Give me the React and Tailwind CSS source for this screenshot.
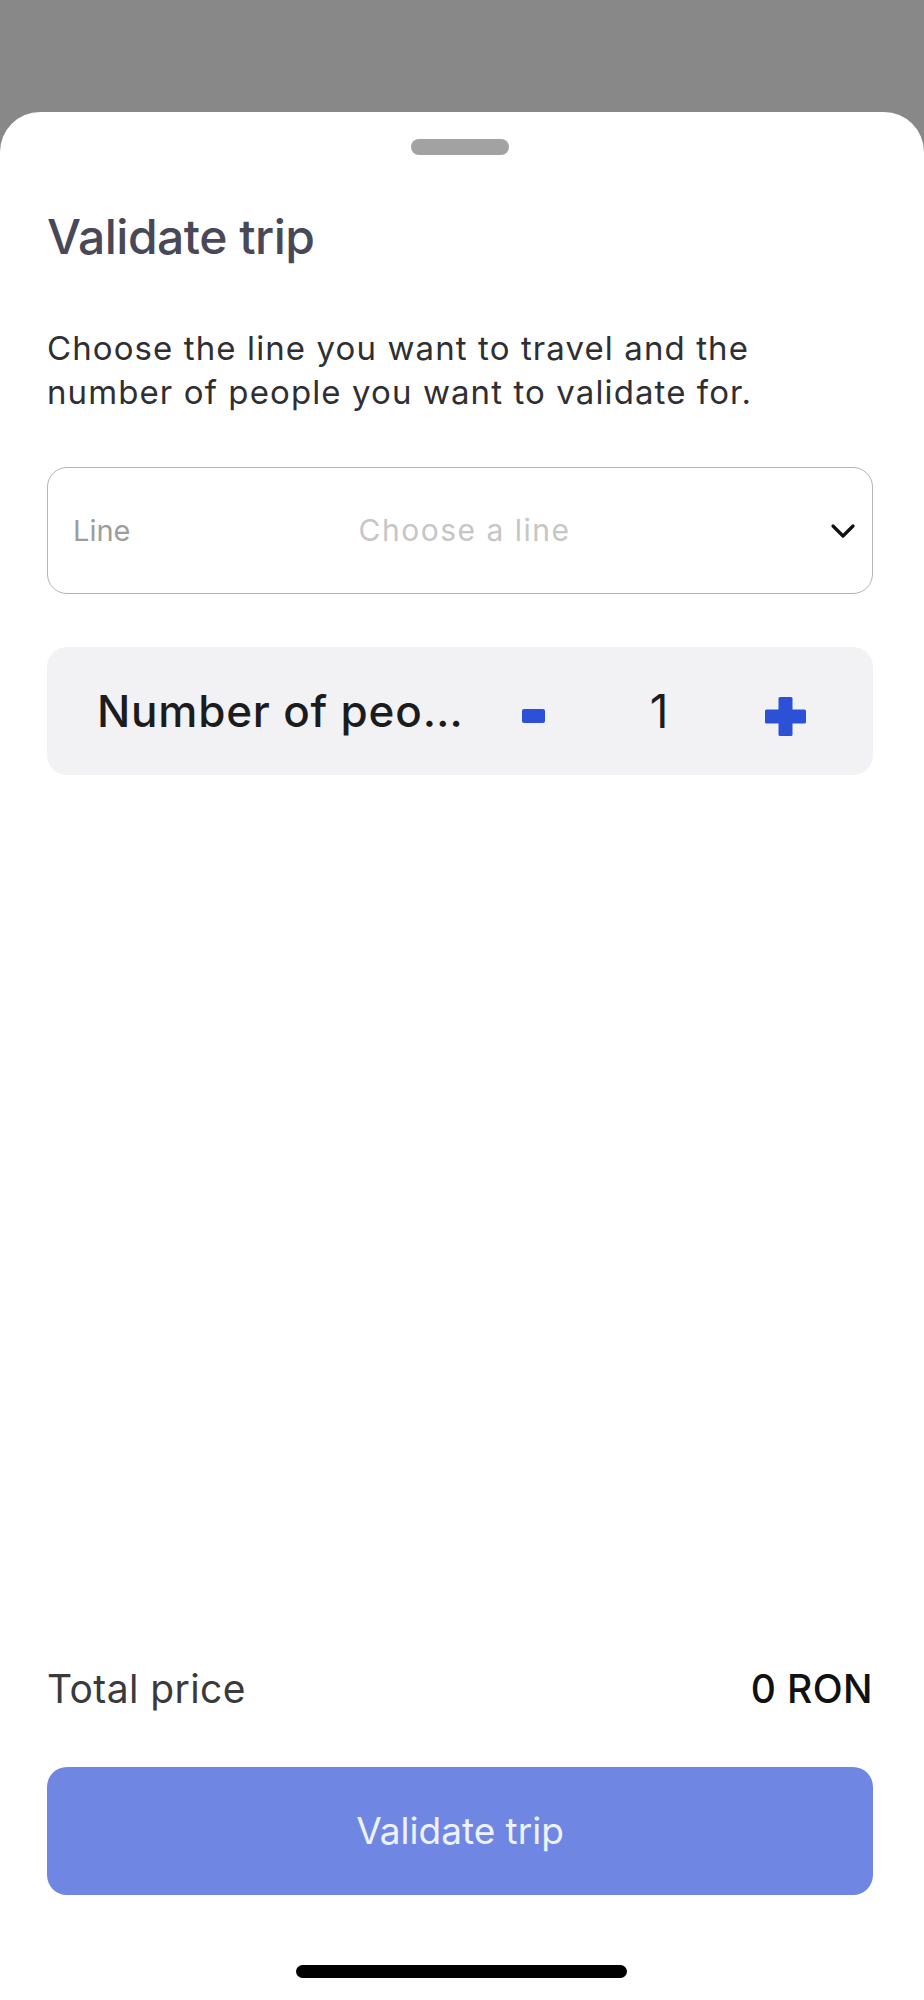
import React, { useState } from "react";

const BLUE = "#2c50d6";

const Chevron = () => (
  <svg width="26" height="16" viewBox="0 0 26 16" fill="none">
    <path d="M3 3l10 10L23 3" stroke="#111" strokeWidth="3.2" strokeLinecap="round" strokeLinejoin="round" />
  </svg>
);

const PlusIcon = () => (
  <svg width="41" height="39" viewBox="0 0 41 39">
    <rect x="13.5" y="0" width="14" height="39" rx="1.5" fill={BLUE} />
    <rect x="0" y="12.5" width="41" height="14" rx="1.5" fill={BLUE} />
  </svg>
);

const App = () => {
  const [people, setPeople] = useState(1);

  return (
    <div
      className="h-screen flex flex-col bg-[#888888] overflow-hidden"
      style={{ fontFamily: "Inter, 'Noto Sans', sans-serif" }}
    >
      {/* dimmed background */}
      <div className="h-[112px] shrink-0" />

      {/* bottom sheet */}
      <div className="flex-1 flex flex-col bg-white rounded-t-[40px] pl-[47px] pr-[51px]">
        <div className="mt-[27px] ml-[364px] w-[98px] h-[16px] rounded-full bg-[#a2a2a2]" />

        <h1 className="mt-[53px] text-[48px] leading-[58px] font-medium text-[#484858] tracking-[-0.5px]">
          Validate trip
        </h1>

        <p className="mt-[60px] text-[33px] leading-[44px] text-[#2f2f33] tracking-[1.1px]">
          Choose the line you want to travel and the number of people you want to validate for.
        </p>

        {/* line select */}
        <button className="mt-[53px] h-[127px] w-full grid grid-cols-[1fr_auto_1fr] items-center rounded-[20px] border-[1.5px] border-[#b4b4b4] pl-[25px] pr-[16px]">
          <span className="text-left text-[29px] text-[#9d9d9d]">Line</span>
          <span className="text-[30px] text-[#c6c6c6] tracking-[1.5px]">Choose a line</span>
          <span className="flex justify-end">
            <Chevron />
          </span>
        </button>

        {/* number of people */}
        <div className="mt-[53px] h-[128px] flex items-center rounded-[20px] bg-[#f2f2f4] pl-[50px] pr-[25px]">
          <span className="flex-1 min-w-0 truncate text-[44px] font-medium text-[#1c1c1e] tracking-[0.8px]">
            Number of people
          </span>
          <button
            onClick={() => setPeople((p) => Math.max(1, p - 1))}
            className="w-[126px] h-[60px] flex items-center justify-center mt-[10px]"
          >
            <span className="block w-[23px] h-[14px] rounded-[2px] bg-[#2c50d6]" />
          </button>
          <span className="w-[126px] text-center text-[46px] font-normal text-[#1c1c1e]">{people}</span>
          <button
            onClick={() => setPeople((p) => p + 1)}
            className="w-[126px] h-[60px] flex items-center justify-center mt-[10px]"
          >
            <PlusIcon />
          </button>
        </div>

        <div className="flex-1" />

        {/* footer */}
        <div className="flex items-center justify-between text-[39px] leading-[46px] tracking-[0.4px]">
          <span className="text-[#3a3a3c]">Total price</span>
          <span className="font-medium text-[#111]">0 RON</span>
        </div>

        <button className="mt-[55px] h-[128px] w-full rounded-[20px] bg-[#6f87e3] text-[37px] text-[#eef1ff]">
          Validate trip
        </button>

        <div className="mt-[70px] mb-[22px] ml-[249px] w-[331px] h-[13px] rounded-full bg-black" />
      </div>
    </div>
  );
};

export default App;
